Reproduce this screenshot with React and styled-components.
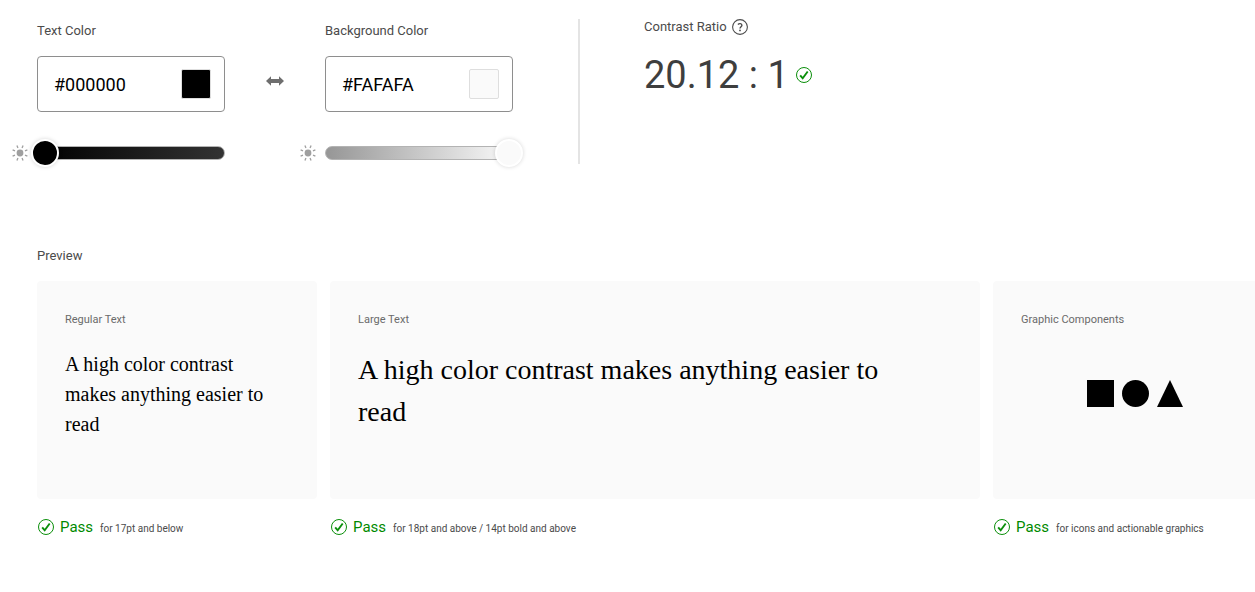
import React, { useState } from "react";
import styled, { createGlobalStyle } from "styled-components";

const GlobalStyle = createGlobalStyle`
  * { box-sizing: border-box; }
  body {
    margin: 0;
    background: #fff;
    color: #4b4b4b;
    font-family: Roboto, "Liberation Sans", sans-serif;
    font-size: 13px;
    line-height: 24px;
    overflow-x: hidden;
  }
  h2, h3, p { margin: 0; font-weight: 400; }
  button { padding: 0; border: 0; background: none; cursor: pointer; }
`;

const Page = styled.main`
  padding: 19px 0 24px 12px;
  overflow: hidden;
`;

const Controls = styled.section`
  display: flex;
`;

const Field = styled.div`
  display: grid;
  grid-template-columns: 16px 188px;
  column-gap: 9px;
  padding-bottom: 3px;
`;

const FieldLabel = styled.label`
  grid-column: 2;
`;

const ColorBox = styled.div`
  grid-column: 2;
  display: flex;
  align-items: center;
  justify-content: space-between;
  height: 56px;
  margin: 13px 0 33px;
  padding: 0 13px 0 16px;
  border: 1px solid #8e8e8e;
  border-radius: 4px;
`;

const HexInput = styled.input`
  width: 100px;
  padding: 2px 0 0;
  border: 0;
  outline: 0;
  background: none;
  color: #000;
  font-family: inherit;
  font-size: 18px;
  line-height: 28px;
`;

const Swatch = styled.button`
  && {
    width: 30px;
    height: 30px;
    border: 1px solid #dedede;
    border-radius: 2px;
    background: ${(p) => p.$color};
  }
`;

const SunIcon = styled.svg`
  align-self: center;
`;

const Track = styled.div`
  display: flex;
  align-items: center;
  align-self: center;
  height: 14px;
  border: 1px solid #b3b3b3;
  border-radius: 7px;
  background: ${(p) => p.$fill};
`;

const Range = styled.input`
  flex: none;
  appearance: none;
  width: 204px;
  height: 28px;
  margin: 0 0 0 -7px;
  background: none;

  &::-webkit-slider-thumb {
    appearance: none;
    width: 28px;
    height: 28px;
    border: 2px solid #fff;
    border-radius: 50%;
    background: ${(p) => p.$color};
    box-shadow: 0 0 4px rgba(0, 0, 0, 0.16);
  }
`;

const SwapButton = styled.button`
  align-self: flex-start;
  display: flex;
  align-items: center;
  justify-content: center;
  width: 24px;
  height: 24px;
  margin: 50px 13px 0 38px;
`;

const Divider = styled.div`
  width: 2px;
  margin: 0 64px 0 65px;
  background: #e4e4e4;
`;

const Heading = styled.h2`
  font-size: 13px;
  line-height: 24px;
`;

const RatioTitle = styled.div`
  display: flex;
  align-items: center;
  gap: 5px;
  height: 16px;
`;

const HelpButton = styled.button`
  display: flex;
`;

const RatioValue = styled.div`
  display: flex;
  align-items: center;
  gap: 6px;
  margin-top: 12px;
  color: #3e3e3e;
  font-size: 38px;
  line-height: 56px;
`;

const Preview = styled.section`
  padding: 80px 0 0 25px;
`;

const Cards = styled.div`
  display: grid;
  grid-template-columns: 280px minmax(650px, 1fr) 284px;
  column-gap: 13px;
  margin-top: 13px;
`;

const Card = styled.div`
  height: 218px;
  padding: 28px;
  border-radius: 4px;
  background: #fafafa;
`;

const CardTitle = styled.h3`
  color: #6a6a6a;
  font-size: 11px;
  line-height: 22px;
`;

const Sample = styled.p`
  max-width: 560px;
  margin-top: 18px;
  color: #000;
  font-family: "Liberation Serif", serif;
  font-size: ${(p) => (p.$large ? 28 : 20)}px;
  line-height: ${(p) => (p.$large ? 42 : 30)}px;
`;

const Shapes = styled.svg`
  display: block;
  margin: 49px auto 0;
`;

const Verdict = styled.div`
  display: flex;
  align-items: center;
  gap: 5px;
  margin-top: 16px;
`;

const VerdictText = styled.p`
  display: flex;
  align-items: baseline;
  gap: 7px;
  padding-top: 2px;
  line-height: 20px;
`;

const Pass = styled.span`
  color: #008a00;
  font-size: 15px;
`;

const VerdictNote = styled.span`
  font-size: 10px;
`;

function Check() {
  return (
    <svg width="18" height="18" viewBox="0 0 18 18" aria-hidden="true" fill="none" stroke="#0a8f0a">
      <circle cx="9" cy="9" r="7.5" strokeWidth="1" />
      <path d="M5.2 9.3l2.5 3 5-6.8" strokeWidth="1.9" />
    </svg>
  );
}

function Sun() {
  return (
    <SunIcon width="16" height="16" viewBox="0 0 16 16" aria-hidden="true">
      <circle cx="8" cy="8" r="3.4" fill="#9f9f9f" />
      <g stroke="#9f9f9f" strokeWidth="1.3">
        {[22.5, 67.5, 112.5, 157.5, 202.5, 247.5, 292.5, 337.5].map((a) => (
          <path key={a} d="M13.4 8h2.6" transform={`rotate(${a} 8 8)`} />
        ))}
      </g>
    </SunIcon>
  );
}

function ColorField({ id, label, color, fill, start }) {
  const [hex, setHex] = useState(color);
  return (
    <Field>
      <FieldLabel htmlFor={id}>{label}</FieldLabel>
      <ColorBox>
        <HexInput id={id} value={hex} onChange={(e) => setHex(e.target.value)} />
        <Swatch type="button" $color={color} aria-label={`Choose ${label}`} />
      </ColorBox>
      <Sun />
      <Track $fill={fill}>
        <Range type="range" min="0" max="100" defaultValue={start} $color={color} aria-label={`${label} lightness`} />
      </Track>
    </Field>
  );
}

function PreviewItem({ title, note, children }) {
  return (
    <div>
      <Card>
        <CardTitle>{title}</CardTitle>
        {children}
      </Card>
      <Verdict>
        <Check />
        <VerdictText>
          <Pass>Pass</Pass>
          <VerdictNote>{note}</VerdictNote>
        </VerdictText>
      </Verdict>
    </div>
  );
}

export default function App() {
  return (
    <Page>
      <GlobalStyle />
      <Controls>
        <ColorField id="text-color" label="Text Color" color="#000000" fill="linear-gradient(90deg, #000, #333)" start={0} />
        <SwapButton type="button" aria-label="Swap colors">
          <svg width="18" height="12" viewBox="0 0 18 12" aria-hidden="true">
            <path fill="#6e6e6e" d="M0 6L5 1.2V4h8V1.2L18 6l-5 4.8V8H5v2.8z" />
          </svg>
        </SwapButton>
        <ColorField id="background-color" label="Background Color" color="#FAFAFA" fill="linear-gradient(90deg, #969696, #fafafa)" start={100} />
        <Divider />
        <div>
          <RatioTitle>
            <Heading>Contrast Ratio</Heading>
            <HelpButton type="button" aria-label="About contrast ratio">
              <svg width="16" height="16" viewBox="0 0 16 16" aria-hidden="true" fill="none" stroke="#4b4b4b">
                <circle cx="8" cy="8" r="7.4" strokeWidth="1.1" />
                <path d="M5.9 5.4C7 4.4 9.9 4.2 9.9 6.2c0 1.5-1.9 1.5-1.9 3.3" strokeWidth="1.4" />
                <circle cx="8" cy="11.4" r="0.9" fill="#4b4b4b" stroke="none" />
              </svg>
            </HelpButton>
          </RatioTitle>
          <RatioValue>
            20.12 : 1
            <Check />
          </RatioValue>
        </div>
      </Controls>
      <Preview>
        <Heading>Preview</Heading>
        <Cards>
          <PreviewItem title="Regular Text" note="for 17pt and below">
            <Sample>A high color contrast makes anything easier to read</Sample>
          </PreviewItem>
          <PreviewItem title="Large Text" note="for 18pt and above / 14pt bold and above">
            <Sample $large>A high color contrast makes anything easier to read</Sample>
          </PreviewItem>
          <PreviewItem title="Graphic Components" note="for icons and actionable graphics">
            <Shapes width="96" height="27" viewBox="0 0 96 27" aria-hidden="true">
              <rect width="27" height="27" />
              <circle cx="48.5" cy="13.5" r="13.5" />
              <path d="M83 0L96 27H70z" />
            </Shapes>
          </PreviewItem>
        </Cards>
      </Preview>
    </Page>
  );
}
